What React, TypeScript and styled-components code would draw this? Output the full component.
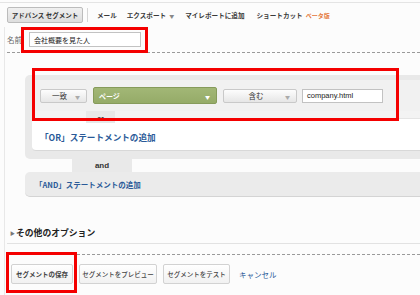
import React from "react";
import styled, { createGlobalStyle } from "styled-components";

const GlobalStyle = createGlobalStyle`
  html, body { margin: 0; padding: 0; background: #fcfcfc; }
  body { font-family: "Noto Sans CJK JP", "Noto Sans", sans-serif; color: #333; text-spacing-trim: space-all; }
  * { box-sizing: border-box; }
`;

const Page = styled.div`
  position: relative;
  width: 420px;
  height: 295px;
  overflow: hidden;
  padding-top: 2px;
  background: #fcfcfc;
`;

const Toolbar = styled.div`
  display: flex;
  align-items: center;
  height: 25px;
  border-top: 1px solid #e4e4e4;
  padding: 4px 0 4px 7px;
`;

const ToolButton = styled.div`
  display: flex;
  align-items: center;
  justify-content: center;
  width: 76px;
  height: 16px;
  border: 1px solid #bcbcbc;
  border-radius: 2px;
  background: linear-gradient(#f0f0f0, #dedede);
  font-size: 6.5px;
  font-weight: 700;
  color: #333;
  white-space: nowrap;
`;

const Divider = styled.div`
  width: 1px;
  height: 14px;
  background: #d6d6d6;
  margin: 0 9px 0 4px;
`;

const MenuItem = styled.div<{ $gap?: number }>`
  display: flex;
  align-items: center;
  margin-right: ${(p) => p.$gap ?? 10}px;
  font-size: 6.6px;
  font-weight: 700;
  color: #3a3a3a;
  white-space: nowrap;
`;

const Caret = styled.span<{ $color?: string }>`
  font-size: 5px;
  color: ${(p) => p.$color ?? "#888"};
  margin-left: 3px;
`;

const Beta = styled.span`
  color: #e4773a;
  font-size: 6px;
  margin-left: 3px;
`;

const Body = styled.div`
  margin-left: 4px;
  border-left: 1px solid #e8e8e8;
  padding-left: 2px;
  height: 268px;
`;

const NameRow = styled.div`
  display: flex;
  align-items: center;
  padding-top: 5px;
  height: 20px;
`;

const Label = styled.span`
  font-size: 7.5px;
  color: #666;
  width: 22px;
`;

const TextBox = styled.div<{ $w: number; $h: number; $latin?: boolean }>`
  display: flex;
  align-items: center;
  width: ${(p) => p.$w}px;
  height: ${(p) => p.$h}px;
  border: 1px solid #c2c2c2;
  background: #fff;
  padding-left: 4px;
  font-size: ${(p) => (p.$latin ? 7.5 : 7)}px;
  color: #222;
  font-family: ${(p) =>
    p.$latin ? '"Liberation Sans", Arial, sans-serif' : '"Noto Sans CJK JP", sans-serif'};
  white-space: nowrap;
`;

const DashedRule = styled.div<{ $top: number }>`
  margin-top: ${(p) => p.$top}px;
  border-top: 1px dashed #9a9a9a;
  height: 0;
`;

const SolidRule = styled.div<{ $top: number }>`
  margin-top: ${(p) => p.$top}px;
  border-top: 1px solid #e2e2e2;
  height: 0;
`;

const Builder = styled.div`
  margin: 22px 0 0 18px;
`;

const AndBlock = styled.div`
  background: #e9e9e9;
  border-radius: 5px 0 0 5px;
  padding: 5px 0 8px 7px;
`;

const OrCard = styled.div`
  background: #fff;
  border-bottom: 1px solid #d8d8d8;
  border-radius: 4px 0 0 4px;
  overflow: hidden;
`;

const ConditionRow = styled.div`
  display: flex;
  align-items: center;
  height: 31px;
  background: #f1f1f1;
  padding-left: 8px;
`;

const Select = styled.div<{ $w: number; $ml: number }>`
  display: flex;
  align-items: center;
  justify-content: center;
  position: relative;
  width: ${(p) => p.$w}px;
  height: 14px;
  margin-left: ${(p) => p.$ml}px;
  border: 1px solid #c9c9c9;
  border-radius: 2px;
  background: linear-gradient(#fdfdfd, #e6e6e6);
  font-size: 7.5px;
  color: #333;
  padding-right: 8px;
`;

const SelectCaret = styled.span<{ $color?: string }>`
  position: absolute;
  right: 6px;
  top: 50%;
  transform: translateY(-50%);
  font-size: 5px;
  color: ${(p) => p.$color ?? "#aaa"};
`;

const GreenSelect = styled.div`
  display: flex;
  align-items: center;
  position: relative;
  width: 124px;
  height: 17px;
  margin-left: 6px;
  border: 1px solid #869b5b;
  border-radius: 2px;
  background: linear-gradient(#a2b776, #95ab68);
  color: #fff;
  font-size: 7px;
  font-weight: 700;
  padding-left: 5px;
`;

const InputWrap = styled.div`
  margin-left: 5px;
`;

const OrSeparator = styled.div`
  display: flex;
  height: 12px;
  background: #fff;
`;

const OrSide = styled.div<{ $w?: number }>`
  ${(p) => (p.$w ? `width: ${p.$w}px;` : "flex: 1;")}
  height: 8px;
  background: #f3f3f3;
  border-bottom: 1px solid #e4e4e4;
`;

const OrTab = styled.div`
  width: 29px;
  height: 12px;
  background: #e8e8e8;
  display: flex;
  align-items: flex-end;
  justify-content: center;
  font-size: 6.5px;
  font-weight: 700;
  color: #333;
  font-family: "Liberation Sans", Arial, sans-serif;
  line-height: 9px;
`;

const LinkRow = styled.div<{ $pl: number; $h: number }>`
  display: flex;
  align-items: center;
  height: ${(p) => p.$h}px;
  padding-left: ${(p) => p.$pl}px;
`;

const Link = styled.span<{ $bold?: boolean; $size?: number }>`
  font-size: ${(p) => p.$size ?? 7.5}px;
  font-weight: ${(p) => (p.$bold ? 700 : 400)};
  color: #2a5a98;
  white-space: nowrap;
`;

const AndSeparator = styled.div`
  height: 13px;
  padding-left: 47px;
  background: #fcfcfc;
`;

const AndTab = styled.div`
  width: 60px;
  height: 13px;
  background: #e9e9e9;
  display: flex;
  align-items: center;
  justify-content: center;
  font-family: "Liberation Sans", Arial, sans-serif;
  font-size: 8px;
  font-weight: 700;
  color: #333;
`;

const AndAdd = styled.div`
  background: #ebebeb;
  border-bottom: 1px solid #d4d4d4;
  border-radius: 5px 0 0 5px;
`;

const Options = styled.div`
  display: flex;
  align-items: center;
  margin-top: 29px;
  padding-left: 3px;
  height: 13px;
`;

const Triangle = styled.span`
  font-size: 5px;
  color: #777;
  margin-right: 1px;
`;

const OptionsTitle = styled.span`
  font-size: 8.8px;
  font-weight: 700;
  color: #222;
`;

const ButtonRow = styled.div`
  display: flex;
  align-items: center;
  padding-left: 4px;
  margin-top: 9px;
  gap: 6px;
`;

const ActionButton = styled.div<{ $w: number; $primary?: boolean }>`
  display: flex;
  align-items: center;
  justify-content: center;
  width: ${(p) => p.$w}px;
  height: 20px;
  border: 1px solid #d2d2d2;
  border-radius: 2px;
  background: linear-gradient(#ffffff, #f1f1f1);
  font-size: 6.5px;
  font-weight: ${(p) => (p.$primary ? 700 : 500)};
  color: #444;
  white-space: nowrap;
`;

const Highlight = styled.div<{ $x: number; $y: number; $w: number; $h: number }>`
  position: absolute;
  left: ${(p) => p.$x}px;
  top: ${(p) => p.$y}px;
  width: ${(p) => p.$w}px;
  height: ${(p) => p.$h}px;
  border: 3px solid #f40000;
  pointer-events: none;
`;

export default function App() {
  return (
    <>
      <GlobalStyle />
      <Page>
        <Toolbar>
          <ToolButton>アドバンス セグメント</ToolButton>
          <Divider />
          <MenuItem>メール</MenuItem>
          <MenuItem $gap={11}>
            エクスポート<Caret>▼</Caret>
          </MenuItem>
          <MenuItem $gap={12}>マイレポートに追加</MenuItem>
          <MenuItem>
            ショートカット<Beta>ベータ版</Beta>
          </MenuItem>
        </Toolbar>
        <Body>
          <NameRow>
            <Label>名前:</Label>
            <TextBox $w={112} $h={15}>会社概要を見た人</TextBox>
          </NameRow>
          <DashedRule $top={5} />
          <Builder>
            <AndBlock>
              <OrCard>
                <ConditionRow>
                  <Select $w={47} $ml={0}>
                    一致<SelectCaret>▼</SelectCaret>
                  </Select>
                  <GreenSelect>
                    ページ<SelectCaret $color="#fff">▼</SelectCaret>
                  </GreenSelect>
                  <Select $w={74} $ml={6}>
                    含む<SelectCaret>▼</SelectCaret>
                  </Select>
                  <InputWrap>
                    <TextBox $w={81} $h={14} $latin>
                      company.html
                    </TextBox>
                  </InputWrap>
                </ConditionRow>
                <OrSeparator>
                  <OrSide $w={54} />
                  <OrTab>or</OrTab>
                  <OrSide />
                </OrSeparator>
                <LinkRow $pl={8} $h={27}>
                  <Link $bold $size={8.6}>「OR」ステートメントの追加</Link>
                </LinkRow>
              </OrCard>
            </AndBlock>
            <AndSeparator>
              <AndTab>and</AndTab>
            </AndSeparator>
            <AndAdd>
              <LinkRow $pl={10} $h={24}>
                <Link $bold>「AND」ステートメントの追加</Link>
              </LinkRow>
            </AndAdd>
          </Builder>
          <Options>
            <Triangle>▶</Triangle>
            <OptionsTitle>その他のオプション</OptionsTitle>
          </Options>
          <SolidRule $top={4} />
          <DashedRule $top={10} />
          <ButtonRow>
            <ActionButton $w={62} $primary>
              セグメントの保存
            </ActionButton>
            <ActionButton $w={78}>セグメントをプレビュー</ActionButton>
            <ActionButton $w={67}>セグメントをテスト</ActionButton>
            <LinkRow $pl={3} $h={20}>
              <Link $size={7.5}>キャンセル</Link>
            </LinkRow>
          </ButtonRow>
        </Body>
        <Highlight $x={21} $y={27} $w={127} $h={26} />
        <Highlight $x={32} $y={68} $w={367} $h={53} />
        <Highlight $x={6} $y={252} $w={71} $h={41} />
      </Page>
    </>
  );
}
